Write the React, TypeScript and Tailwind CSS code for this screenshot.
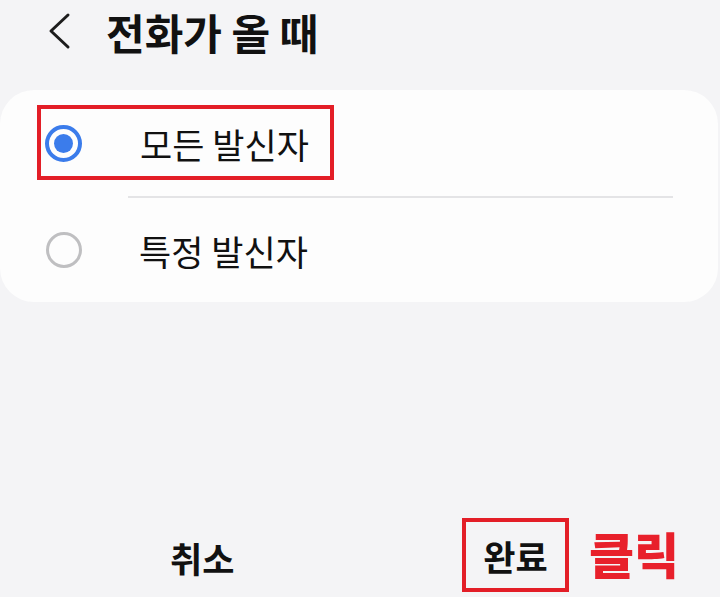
import React from "react";

const KR = "font-['Noto_Sans_CJK_KR','Noto_Sans',sans-serif]";

function Radio({ checked }: { checked: boolean }) {
  if (checked) {
    return (
      <span className="flex h-[37px] w-[37px] shrink-0 items-center justify-center rounded-full border-[4px] border-[#3b7ceb]">
        <span className="h-[19px] w-[19px] rounded-full bg-[#3b7ceb]" />
      </span>
    );
  }
  return <span className="h-[36px] w-[36px] shrink-0 rounded-full border-[3px] border-[#bfbfc1]" />;
}

export default function App() {
  return (
    <div className={`flex h-[597px] w-[720px] flex-col overflow-hidden bg-[#f4f4f6] text-[#111] ${KR}`}>
      {/* header */}
      <div className="flex h-[66px] items-center pl-[48px]">
        <svg width="24" height="38" viewBox="0 0 24 38" fill="none" className="mt-[-4px]">
          <path d="M20 3 L3 19 L20 35" stroke="#1c1c1c" strokeWidth="3" strokeLinecap="round" strokeLinejoin="round" />
        </svg>
        <h1 className="ml-[34px] mt-[-2px] text-[42px] font-bold leading-none">전화가 올 때</h1>
      </div>

      {/* options card */}
      <div className="relative mr-[2px] mt-[24px] rounded-[34px] bg-[#fdfdfd]">
        <div className="flex h-[106px] items-center pl-[45px]">
          <Radio checked />
          <span className="ml-[58px] text-[35px] leading-none">모든 발신자</span>
        </div>
        <div className="ml-[128px] mr-[45px] h-[2px] bg-[#e4e4e6]" />
        <div className="flex h-[104px] items-center pl-[46px]">
          <Radio checked={false} />
          <span className="ml-[57px] text-[35px] leading-none">특정 발신자</span>
        </div>
        <div className="pointer-events-none absolute left-[37px] top-[15px] h-[75px] w-[297px] border-[4px] border-[#e31e27]" />
      </div>

      <div className="flex-1" />

      {/* bottom buttons */}
      <div className="flex h-[79px] items-start pl-[170px]">
        <div className="w-[292px] pt-[22px]">
          <span className="text-[35px] font-bold leading-none">취소</span>
        </div>
        <div className="flex h-[74px] w-[107px] items-center justify-center border-[4px] border-[#e31e27]">
          <span className="text-[35px] font-bold leading-none">완료</span>
        </div>
        <span className="ml-[20px] mt-[10px] text-[49px] font-black leading-none text-[#e8202b]">클릭</span>
      </div>
    </div>
  );
}
